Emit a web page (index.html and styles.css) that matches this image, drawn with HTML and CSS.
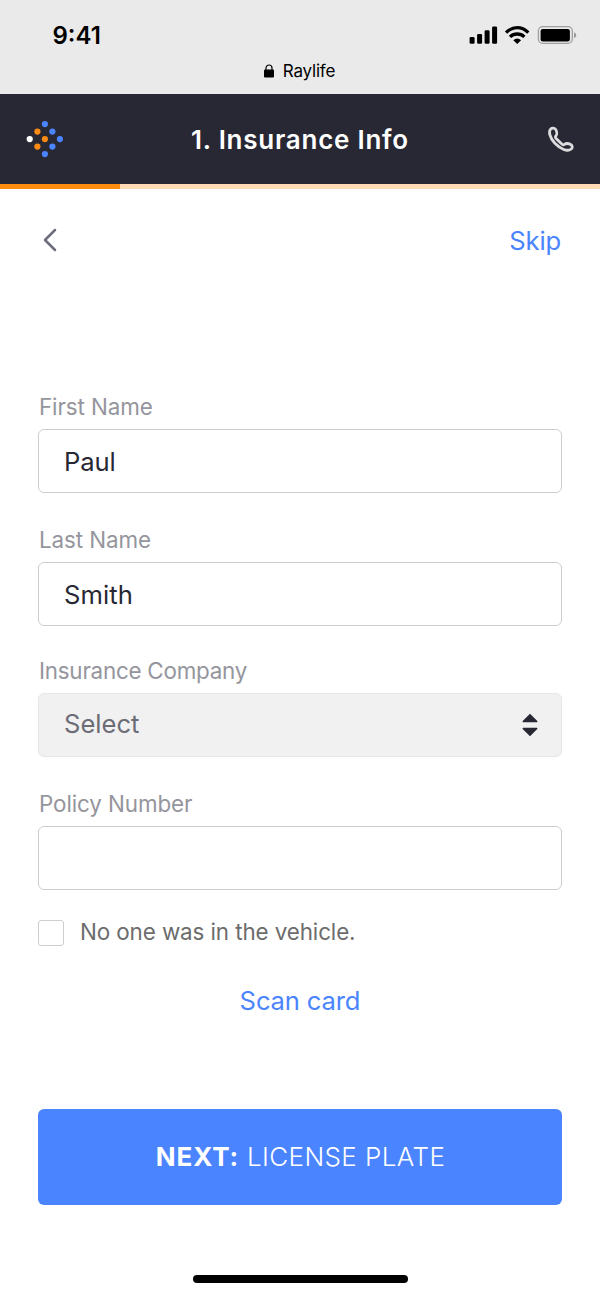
FILE: index.html
```html
<!DOCTYPE html>
<html lang="en">
<head>
<meta charset="utf-8">
<title>Raylife</title>
<link rel="stylesheet" href="styles.css">
</head>
<body>
<div class="screen">
  <div class="browser-bar">
    <div class="status">
      <span class="time">9:41</span>
      <svg class="status-icons" width="108" height="22" viewBox="0 0 108 22">
        <g fill="#000">
          <rect x="1.6" y="13" width="5" height="6.7" rx="1.3"/>
          <rect x="9.1" y="10" width="5" height="9.7" rx="1.3"/>
          <rect x="16.6" y="6.3" width="5" height="13.4" rx="1.3"/>
          <rect x="24.1" y="2.5" width="5" height="17.2" rx="1.3"/>
          <path d="M49.2 20 45.3 16.2Q49.2 12.8 53.1 16.2Z"/>
          <rect x="72.6" y="5" width="29.3" height="12.4" rx="2.2"/>
        </g>
        <g fill="none" stroke="#000" stroke-width="3.3">
          <path d="M38.1 8.6Q43.2 3.7 49.2 3.7T60.3 8.6"/>
          <path d="M42 12.9Q45.2 10 49.2 10T56.4 12.9"/>
        </g>
        <rect x="70.4" y="2.7" width="33.9" height="16.7" rx="4.3" fill="none" stroke="#a0a0a0" stroke-width="1.3"/>
        <path d="M106 8.2q2.2 1 2.2 3t-2.2 3z" fill="#999"/>
      </svg>
    </div>
    <div class="site">
      <svg width="12" height="15" viewBox="0 0 12 15"><rect x="1" y="5.6" width="10" height="8" rx="1" fill="#000"/><path d="M3 6.2V4a3 3 0 0 1 6 0v2.2" fill="none" stroke="#000" stroke-width="1.2"/></svg>
      <span>Raylife</span>
    </div>
  </div>
  <header class="header">
    <svg class="logo" width="38" height="38" viewBox="0 0 38 38">
      <g fill="#4b84ff"><circle cx="18.9" cy="4.1" r="3.1"/><circle cx="26.4" cy="11.6" r="3.1"/><circle cx="33.9" cy="19.1" r="3.1"/><circle cx="26.4" cy="26.6" r="3.1"/><circle cx="18.9" cy="34.1" r="3.1"/></g>
      <g fill="#f98b14"><circle cx="11.4" cy="11.6" r="3.1"/><circle cx="18.9" cy="19.1" r="3.1"/><circle cx="11.4" cy="26.6" r="3.1"/></g>
      <circle cx="3.7" cy="19.1" r="3.1" fill="#fff"/>
    </svg>
    <h1 class="title">1. Insurance Info</h1>
    <svg class="phone" width="28" height="28" viewBox="0 0 28 28"><path d="M3.6 4.1C1.6 6.3 2.1 11.9 7.9 18.3C13.6 24.2 20.3 27 24.3 24C25.7 22.8 25.5 20.4 23.7 19.5C21.4 18.4 18.8 18.3 17.4 19.5C16.6 20.2 15.5 19.9 13.7 18.1L9.4 13.8C8.3 12.6 8.1 11.6 9 10.7C10.1 9.6 9.9 6.6 8.8 4.6C7.8 2.9 5 2.6 3.6 4.1Z" fill="none" stroke="#dcdcde" stroke-width="2.8" stroke-linejoin="round"/></svg>
  </header>
  <div class="progress"><div class="progress-done"></div></div>
  <main class="content">
    <nav class="nav">
      <svg width="16" height="26" viewBox="0 0 16 26"><path d="M14 3 4 13 14 23" fill="none" stroke="#6b6c7e" stroke-width="2.5" stroke-linecap="round" stroke-linejoin="round"/></svg>
      <a class="link skip">Skip</a>
    </nav>
    <form class="form">
      <div class="field first"><label class="label">First Name</label><div class="control">Paul</div></div>
      <div class="field last"><label class="label">Last Name</label><div class="control smith">Smith</div></div>
      <div class="field company"><label class="label company-label">Insurance Company</label>
        <div class="control select"><span class="select-text">Select</span>
          <svg width="16" height="24" viewBox="0 0 16 24"><path d="M8 .8.7 8.1Q.2 9.3 1.2 9.3H14.8Q15.8 9.3 15.3 8.1ZM8 23.2.7 15.9Q.2 14.7 1.2 14.7H14.8Q15.8 14.7 15.3 15.9Z" fill="#272833"/></svg>
        </div></div>
      <div class="field policy"><label class="label">Policy Number</label><div class="control"></div></div>
      <div class="check"><span class="box"></span><span class="check-text">No one was in the vehicle.</span></div>
      <a class="link scan">Scan card</a>
      <div class="next"><span class="next-text"><b>NEXT:</b> LICENSE PLATE</span></div>
    </form>
  </main>
  <div class="home"></div>
</div>
</body>
</html>
```
FILE: styles.css
```css
* { box-sizing: border-box; }
body { margin: 0; background: #fff; font-family: Inter, "Liberation Sans", sans-serif; color: #272833; }
.screen { width: 600px; height: 1296px; display: flex; flex-direction: column; overflow: hidden; }
.browser-bar { height: 94px; background: #eaeaea; color: #000; }
.status { height: 60px; padding: 24px 24px 0 52.5px; display: flex; justify-content: space-between; }
.time { font-size: 24px; line-height: 23px; font-weight: 600; }
.status-icons { overflow: visible; }
.site { display: flex; justify-content: center; gap: 8px; align-items: center; height: 22px; font-size: 17px; letter-spacing: -.2px; padding-right: 2px; }
.header { height: 90px; padding: 0 25px 0 26px; background: #272833; display: grid; grid-template-columns: 38px 1fr 38px; align-items: center; color: #fff; }
.title { margin: 0; font-size: 26px; font-weight: 600; letter-spacing: .75px; text-align: center; padding-right: 1px; }
.phone { justify-self: end; }
.progress { height: 5px; background: #fedbb5; }
.progress-done { width: 120px; height: 5px; background: #ff8b0f; }
.content { padding: 0 38px; }
.nav { height: 102px; display: flex; justify-content: space-between; align-items: center; padding-left: 3px; }
.link { color: #4b84ff; font-size: 25.6px; line-height: 32px; letter-spacing: -.15px; }
.skip { padding: 2px 1px 0 0; }
.form { display: flex; flex-direction: column; padding-top: 102px; }
.field { display: flex; flex-direction: column; gap: 8px; margin-bottom: 33px; }
.last { margin-bottom: 31px; }
.label { font-size: 22.4px; line-height: 28px; color: #95959d; letter-spacing: -.1px; padding-left: 1px; }
.company-label { letter-spacing: -.23px; }
.control { height: 64px; border: 1.4px solid #cdced1; border-radius: 6px; padding: 0 25px; display: flex; align-items: center; font-size: 25.6px; letter-spacing: -.1px; }
.smith { letter-spacing: .1px; }
.select { background: #f1f1f1; border-color: #e7e7e9; color: #6b6c76; justify-content: space-between; padding-right: 23.5px; }
.select-text { padding-bottom: 3px; letter-spacing: 0; }
.policy { margin-bottom: 30px; }
.check { height: 26px; display: flex; align-items: center; gap: 16px; }
.box { width: 26px; height: 26px; border: 1.4px solid #cdced1; border-radius: 3px; }
.check-text { font-size: 22.4px; color: #6c6c6c; letter-spacing: -.1px; padding-bottom: 4px; }
.scan { align-self: center; margin-top: 39px; }
.next { height: 96px; margin-top: 92px; background: #4b84ff; border-radius: 6px; color: #fff; display: flex; align-items: center; justify-content: center; font-size: 26px; font-weight: 300; letter-spacing: .4px; padding: 0 0 2px 1px; }
.next b { font-weight: 700; letter-spacing: .9px; }
.home { width: 215px; height: 8px; background: #000; border-radius: 4px; margin: auto auto 13px 193px; }
```
